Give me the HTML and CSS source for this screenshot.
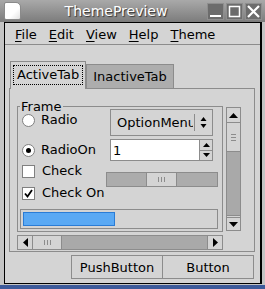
FILE: index.html
```html
<!DOCTYPE html>
<html lang="en">
<head>
  <meta charset="UTF-8" />
  <title>ThemePreview</title>
  <link rel="stylesheet" href="styles.css">
</head>
<body>
  <div class="window">
    <div class="titlebar">
      <div class="app-icon"></div>
      <div class="title">ThemePreview</div>
      <div class="wm-buttons">
        <div class="wm-btn"><svg width="17" height="17"><rect x="3" y="12" width="11" height="2" fill="#fff"/></svg></div>
        <div class="wm-btn"><svg width="17" height="17"><rect x="3.5" y="3.5" width="10" height="10" fill="none" stroke="#fff" stroke-width="1.5"/></svg></div>
        <div class="wm-btn"><svg width="17" height="17"><path d="M3 3 L14 14 M14 3 L3 14" stroke="#fff" stroke-width="2.2"/></svg></div>
      </div>
    </div>

    <div class="client">
      <div class="menubar">
        <span class="menu-item"><u>F</u>ile</span>
        <span class="menu-item"><u>E</u>dit</span>
        <span class="menu-item"><u>V</u>iew</span>
        <span class="menu-item"><u>H</u>elp</span>
        <span class="menu-item"><u>T</u>heme</span>
      </div>

      <div class="notebook">
        <div class="tabs">
          <div class="tab active"><span class="focus">ActiveTab</span></div>
          <div class="tab">InactiveTab</div>
        </div>
        <div class="pane">
          <div class="pane-top">
            <fieldset class="frame">
              <legend>Frame</legend>
              <div class="frame-grid">
                <div class="left-col">
                  <div class="opt row-radio"><span class="radio"></span>Radio</div>
                  <div class="opt row-radioon"><span class="radio on"></span>RadioOn</div>
                  <div class="opt row-check"><span class="check"></span>Check</div>
                  <div class="opt row-checkon"><span class="check on"><svg width="11" height="11"><path d="M2 5.5 L4.5 8.5 L9 2" fill="none" stroke="#000" stroke-width="1.8"/></svg></span>Check On</div>
                </div>
                <div class="right-col">
                  <div class="option-menu">
                    <span class="om-text">OptionMenu</span>
                    <span class="om-sep"></span>
                    <span class="om-arrows">
                      <svg width="7" height="13"><path d="M0.5 5 L3.5 1 L6.5 5 Z M0.5 8 L3.5 12 L6.5 8 Z" fill="#000"/></svg>
                    </span>
                  </div>
                  <div class="spin">
                    <span class="spin-entry">1</span>
                    <span class="spin-btns">
                      <span class="spin-btn"><svg width="7" height="4"><path d="M0 4 L3.5 0 L7 4 Z" fill="#000"/></svg></span>
                      <span class="spin-btn"><svg width="7" height="4"><path d="M0 0 L3.5 4 L7 0 Z" fill="#000"/></svg></span>
                    </span>
                  </div>
                  <div class="scale">
                    <div class="scale-left"></div>
                    <div class="scale-slider"><i></i><i></i><i></i></div>
                    <div class="scale-right"></div>
                  </div>
                </div>
              </div>
              <div class="progress"><div class="progress-fill" style="width: 48%"></div></div>
            </fieldset>
            <div class="vscroll">
              <div class="sb-btn"><svg width="9" height="5"><path d="M0 5 L4.5 0 L9 5 Z" fill="#000"/></svg></div>
              <div class="vthumb"><i></i><i></i><i></i></div>
              <div class="vtrough"></div>
              <div class="sb-btn sb-down"><svg width="9" height="5"><path d="M0 0 L4.5 5 L9 0 Z" fill="#000"/></svg></div>
            </div>
          </div>
          <div class="hscroll">
            <div class="sb-btn"><svg width="5" height="9"><path d="M5 0 L0 4.5 L5 9 Z" fill="#000"/></svg></div>
            <div class="hthumb"><i></i><i></i><i></i></div>
            <div class="htrough"></div>
            <div class="sb-btn"><svg width="5" height="9"><path d="M0 0 L5 4.5 L0 9 Z" fill="#000"/></svg></div>
          </div>
        </div>
      </div>

      <div class="buttons">
        <button class="push">PushButton</button>
        <button class="push">Button</button>
      </div>
    </div>
    <div class="frame-edge"></div>
  </div>
  <div class="desktop"></div>
</body>
</html>
```

FILE: styles.css
```css
body {
  margin: 0;
  width: 265px;
  height: 289px;
  overflow: hidden;
  font-family: 'DejaVu Sans', sans-serif;
  font-size: 13px;
  color: #000;
  background-color: #3d5a9a;
}
.window {
  height: 285px;
  background-color: #c4c4c4;
  display: flex;
  flex-direction: column;
}
.titlebar {
  height: 22px;
  display: flex;
  align-items: center;
  background: linear-gradient(#a9a9a9, #7c7c7c);
  padding: 0 3px 0 4px;
  box-sizing: border-box;
}
.app-icon {
  width: 15px;
  height: 16px;
  background: linear-gradient(135deg, #fff 60%, #e2e2e2);
  border: 1px solid #8a8a8a;
  border-radius: 2px 5px 2px 2px;
}
.title {
  flex: 1;
  text-align: center;
  color: #fff;
  font-size: 14px;
  text-shadow: 1px 1px 1px #333;
  padding-left: 4px;
}
.wm-buttons {
  display: flex;
  gap: 2px;
}
.wm-btn {
  width: 17px;
  height: 17px;
  background-color: #6c6c6c;
  border: 1px solid #8e8e8e;
  box-sizing: border-box;
}
.wm-btn svg {
  display: block;
  margin: -1px;
}
.client {
  flex: 1;
  margin: 0 3px 0 4px;
  border: 1px solid #000;
  border-right-width: 2px;
  background-color: #d4d4d4;
  display: flex;
  flex-direction: column;
}
.menubar {
  height: 22px;
  border-bottom: 1px solid #8c8c8c;
  display: flex;
  align-items: center;
  padding-left: 4px;
  padding-top: 1px;
  box-sizing: border-box;
}
.menu-item {
  padding: 0 6px;
}
.menu-item u {
  text-decoration-thickness: 1px;
  text-underline-offset: 2px;
}
.notebook {
  margin: 16px 5px 0 4px;
}
.tabs {
  display: flex;
  align-items: flex-end;
  padding-left: 1px;
}
.tab {
  height: 24px;
  padding: 0 6px;
  border: 1px solid #8c8c8c;
  border-bottom: none;
  background-color: #adadad;
  display: flex;
  align-items: center;
  box-sizing: border-box;
}
.tab.active {
  height: 28px;
  background-color: #d4d4d4;
  padding: 0 2px;
  margin-bottom: -1px;
  position: relative;
  z-index: 1;
  align-items: flex-start;
  padding-top: 3px;
}
.focus {
  border: 1px dotted #000;
  padding: 1px 3px 2px 3px;
}
.pane {
  border: 1px solid #8c8c8c;
  height: 164px;
  padding: 18px 11px 0 7px;
  box-sizing: border-box;
}
.pane-top {
  display: flex;
  gap: 3px;
  margin-top: -7px;
}
.frame {
  margin: 0;
  width: 206px;
  height: 132px;
  box-sizing: border-box;
  border: 1px solid #8c8c8c;
  padding: 0 4px 3px 2px;
  min-width: 0;
}
.frame legend {
  padding: 0 1px;
  margin-left: 0;
  line-height: 13px;
}
.frame-grid {
  display: flex;
  height: 89px;
}
.left-col {
  width: 86px;
}
.opt {
  display: flex;
  align-items: center;
  height: 14px;
  line-height: 14px;
  white-space: nowrap;
}
.row-radio { margin-top: 0; }
.row-radioon { margin-top: 16px; }
.row-check { margin-top: 7px; }
.row-checkon { margin-top: 8px; }
.radio {
  width: 11px;
  height: 11px;
  border: 1px solid #808080;
  border-radius: 50%;
  background-color: #fff;
  margin: 0 6px 0 2px;
  position: relative;
}
.radio.on::after {
  content: '';
  position: absolute;
  left: 3px;
  top: 3px;
  width: 5px;
  height: 5px;
  border-radius: 50%;
  background-color: #000;
}
.check {
  width: 11px;
  height: 11px;
  border: 1px solid #808080;
  background-color: #fff;
  margin: 0 7px 0 2px;
}
.check svg {
  display: block;
}
.right-col {
  flex: 1;
  display: flex;
  flex-direction: column;
  align-items: flex-start;
  margin-top: -4px;
}
.option-menu {
  margin: 0 0 0 4px;
  width: 103px;
  height: 27px;
  border: 1px solid #8c8c8c;
  box-sizing: border-box;
  display: flex;
  align-items: center;
  overflow: hidden;
}
.om-text {
  width: 76px;
  flex: none;
  overflow: hidden;
  white-space: nowrap;
  padding-left: 6px;
  margin-right: 1px;
}
.om-sep {
  width: 1px;
  height: 17px;
  background-color: #8c8c8c;
  margin-right: 5px;
  flex: none;
}
.om-arrows svg {
  display: block;
}
.spin {
  margin: 3px 0 0 4px;
  width: 103px;
  height: 22px;
  display: flex;
}
.spin-entry {
  flex: 1;
  background-color: #fff;
  border: 1px solid #8c8c8c;
  padding-left: 2px;
  display: flex;
  align-items: center;
}
.spin-btns {
  width: 13px;
  display: flex;
  flex-direction: column;
}
.spin-btn {
  flex: 1;
  border: 1px solid #8c8c8c;
  border-left: none;
  display: flex;
  align-items: center;
  justify-content: center;
}
.spin-btn + .spin-btn {
  border-top: none;
}
.scale {
  margin-top: 11px;
  width: 112px;
  height: 15px;
  border: 1px solid #8c8c8c;
  box-sizing: border-box;
  display: flex;
  background-color: #acacac;
}
.scale-left {
  width: 39px;
}
.scale-slider, .vthumb, .hthumb {
  background-color: #d4d4d4;
  border: 1px solid #8c8c8c;
  display: flex;
  justify-content: center;
  align-items: center;
  gap: 2px;
  box-sizing: border-box;
}
.scale-slider {
  width: 31px;
  margin: -1px 0;
}
.scale-slider i, .hthumb i {
  width: 1px;
  height: 5px;
  background-color: #8c8c8c;
}
.scale-right {
  flex: 1;
}
.progress {
  margin-top: 7px;
  height: 20px;
  border: 1px solid #8c8c8c;
  box-sizing: border-box;
  padding: 2px;
}
.progress-fill {
  height: 100%;
  background-color: #5aa9f4;
  border: 1px solid #2a7cd6;
  box-sizing: border-box;
}
.vscroll {
  width: 15px;
  height: 124px;
  margin-top: 7px;
  display: flex;
  flex-direction: column;
  border: 1px solid #8c8c8c;
  box-sizing: border-box;
  background-color: #a9a9a9;
}
.sb-btn {
  background-color: #d4d4d4;
  display: flex;
  align-items: center;
  justify-content: center;
  flex: none;
}
.vscroll .sb-btn {
  height: 14px;
}
.vscroll .sb-btn:first-child {
  border-bottom: 1px solid #8c8c8c;
}
.sb-down {
  border-top: 3px double #8c8c8c;
  box-sizing: border-box;
  height: 15px !important;
}
.vthumb {
  height: 29px;
  flex-direction: column;
  border-width: 0 0 1px 0;
}
.vthumb i {
  width: 5px;
  height: 1px;
  background-color: #8c8c8c;
}
.vtrough {
  flex: 1;
}
.hscroll {
  margin-top: 3px;
  width: 206px;
  height: 15px;
  display: flex;
  border: 1px solid #8c8c8c;
  box-sizing: border-box;
  background-color: #a9a9a9;
}
.hscroll .sb-btn {
  width: 14px;
}
.hscroll .sb-btn:first-child {
  border-right: 1px solid #8c8c8c;
}
.hscroll .sb-btn:last-child {
  border-left: 1px solid #8c8c8c;
}
.hthumb {
  width: 29px;
  border-width: 0 1px 0 0;
}
.htrough {
  flex: 1;
}
.buttons {
  display: flex;
  justify-content: flex-end;
  margin: 3px 6px 0 0;
}
.push {
  width: 92px;
  height: 24px;
  font-family: 'DejaVu Sans', sans-serif;
  font-size: 13px;
  color: #000;
  background-color: #d4d4d4;
  border: 1px solid #8c8c8c;
  padding: 0;
}
.push + .push {
  margin-left: -1px;
}
.frame-edge {
  height: 1px;
}
.desktop {
  height: 4px;
  background-color: #3d5a9a;
}
```
